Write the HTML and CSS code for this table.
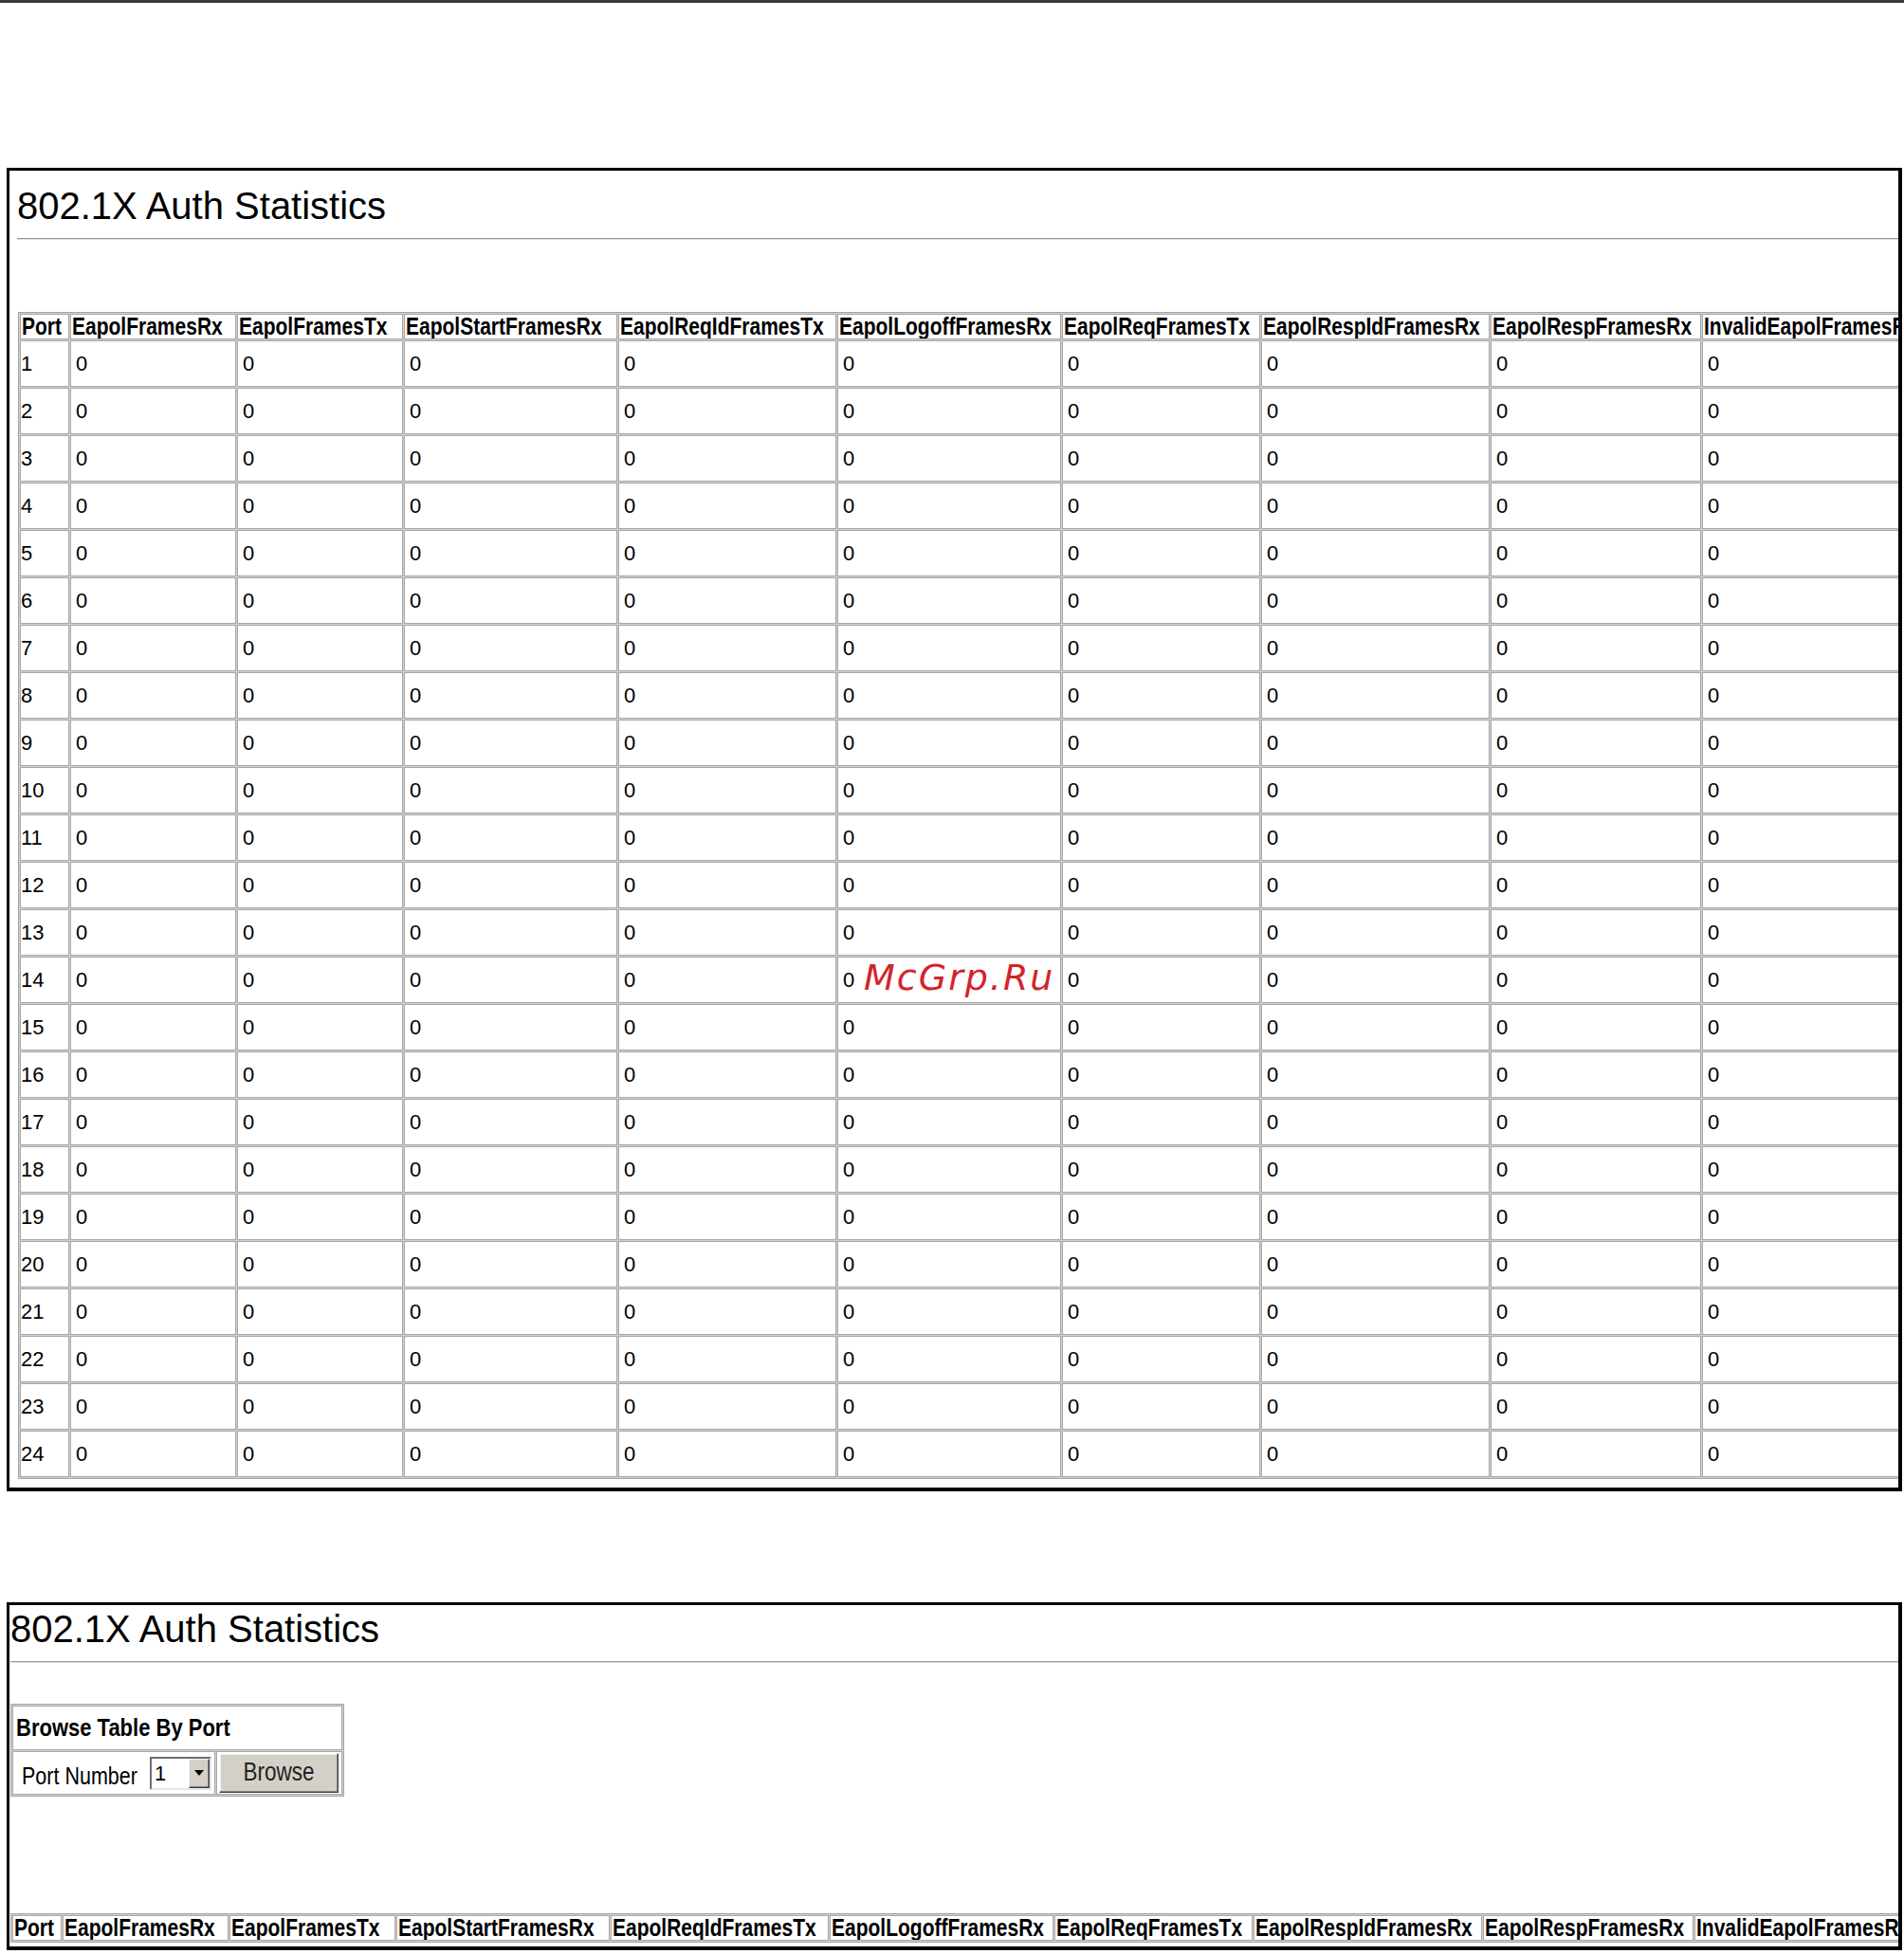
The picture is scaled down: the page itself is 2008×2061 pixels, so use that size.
FILE: index.html
```html
<!DOCTYPE html>
<html lang="en">
<head>
<meta charset="utf-8">
<title>802.1X Auth Statistics</title>
<link rel="stylesheet" href="styles.css">
</head>
<body>
<div class="topbar"></div>

<section class="panel panel-first">
  <h1 class="title">802.1X Auth Statistics</h1>
  <hr class="rule">
  <table class="stats stats-first">
    <thead>
      <tr>
        <th class="c1"><span class="tall">Port</span></th>
        <th class="c2"><span class="tall">EapolFramesRx</span></th>
        <th class="c3"><span class="tall">EapolFramesTx</span></th>
        <th class="c4"><span class="tall">EapolStartFramesRx</span></th>
        <th class="c5"><span class="tall">EapolReqIdFramesTx</span></th>
        <th class="c6"><span class="tall">EapolLogoffFramesRx</span></th>
        <th class="c7"><span class="tall">EapolReqFramesTx</span></th>
        <th class="c8"><span class="tall">EapolRespIdFramesRx</span></th>
        <th class="c9"><span class="tall">EapolRespFramesRx</span></th>
        <th class="c10"><span class="tall">InvalidEapolFramesRx</span></th>
        <th class="c11"><span class="tall">EapLengthErrorFramesRx</span></th>
      </tr>
    </thead>
    <tbody>
      <tr><td class="port">1</td><td>0</td><td>0</td><td>0</td><td>0</td><td>0</td><td>0</td><td>0</td><td>0</td><td>0</td><td>0</td></tr>
      <tr><td class="port">2</td><td>0</td><td>0</td><td>0</td><td>0</td><td>0</td><td>0</td><td>0</td><td>0</td><td>0</td><td>0</td></tr>
      <tr><td class="port">3</td><td>0</td><td>0</td><td>0</td><td>0</td><td>0</td><td>0</td><td>0</td><td>0</td><td>0</td><td>0</td></tr>
      <tr><td class="port">4</td><td>0</td><td>0</td><td>0</td><td>0</td><td>0</td><td>0</td><td>0</td><td>0</td><td>0</td><td>0</td></tr>
      <tr><td class="port">5</td><td>0</td><td>0</td><td>0</td><td>0</td><td>0</td><td>0</td><td>0</td><td>0</td><td>0</td><td>0</td></tr>
      <tr><td class="port">6</td><td>0</td><td>0</td><td>0</td><td>0</td><td>0</td><td>0</td><td>0</td><td>0</td><td>0</td><td>0</td></tr>
      <tr><td class="port">7</td><td>0</td><td>0</td><td>0</td><td>0</td><td>0</td><td>0</td><td>0</td><td>0</td><td>0</td><td>0</td></tr>
      <tr><td class="port">8</td><td>0</td><td>0</td><td>0</td><td>0</td><td>0</td><td>0</td><td>0</td><td>0</td><td>0</td><td>0</td></tr>
      <tr><td class="port">9</td><td>0</td><td>0</td><td>0</td><td>0</td><td>0</td><td>0</td><td>0</td><td>0</td><td>0</td><td>0</td></tr>
      <tr><td class="port">10</td><td>0</td><td>0</td><td>0</td><td>0</td><td>0</td><td>0</td><td>0</td><td>0</td><td>0</td><td>0</td></tr>
      <tr><td class="port">11</td><td>0</td><td>0</td><td>0</td><td>0</td><td>0</td><td>0</td><td>0</td><td>0</td><td>0</td><td>0</td></tr>
      <tr><td class="port">12</td><td>0</td><td>0</td><td>0</td><td>0</td><td>0</td><td>0</td><td>0</td><td>0</td><td>0</td><td>0</td></tr>
      <tr><td class="port">13</td><td>0</td><td>0</td><td>0</td><td>0</td><td>0</td><td>0</td><td>0</td><td>0</td><td>0</td><td>0</td></tr>
      <tr><td class="port">14</td><td>0</td><td>0</td><td>0</td><td>0</td><td>0</td><td>0</td><td>0</td><td>0</td><td>0</td><td>0</td></tr>
      <tr><td class="port">15</td><td>0</td><td>0</td><td>0</td><td>0</td><td>0</td><td>0</td><td>0</td><td>0</td><td>0</td><td>0</td></tr>
      <tr><td class="port">16</td><td>0</td><td>0</td><td>0</td><td>0</td><td>0</td><td>0</td><td>0</td><td>0</td><td>0</td><td>0</td></tr>
      <tr><td class="port">17</td><td>0</td><td>0</td><td>0</td><td>0</td><td>0</td><td>0</td><td>0</td><td>0</td><td>0</td><td>0</td></tr>
      <tr><td class="port">18</td><td>0</td><td>0</td><td>0</td><td>0</td><td>0</td><td>0</td><td>0</td><td>0</td><td>0</td><td>0</td></tr>
      <tr><td class="port">19</td><td>0</td><td>0</td><td>0</td><td>0</td><td>0</td><td>0</td><td>0</td><td>0</td><td>0</td><td>0</td></tr>
      <tr><td class="port">20</td><td>0</td><td>0</td><td>0</td><td>0</td><td>0</td><td>0</td><td>0</td><td>0</td><td>0</td><td>0</td></tr>
      <tr><td class="port">21</td><td>0</td><td>0</td><td>0</td><td>0</td><td>0</td><td>0</td><td>0</td><td>0</td><td>0</td><td>0</td></tr>
      <tr><td class="port">22</td><td>0</td><td>0</td><td>0</td><td>0</td><td>0</td><td>0</td><td>0</td><td>0</td><td>0</td><td>0</td></tr>
      <tr><td class="port">23</td><td>0</td><td>0</td><td>0</td><td>0</td><td>0</td><td>0</td><td>0</td><td>0</td><td>0</td><td>0</td></tr>
      <tr><td class="port">24</td><td>0</td><td>0</td><td>0</td><td>0</td><td>0</td><td>0</td><td>0</td><td>0</td><td>0</td><td>0</td></tr>
    </tbody>
  </table>
</section>

<section class="panel panel-second">
  <h1 class="title">802.1X Auth Statistics</h1>
  <hr class="rule">
  <table class="browse">
    <colgroup>
      <col class="bcol-port">
      <col class="bcol-btn">
    </colgroup>
    <tr><td class="bhead" colspan="2"><span class="tall">Browse Table By Port</span></td></tr>
    <tr>
      <td class="bport">
        <div class="portfield">
          <span class="plabel tall">Port Number</span>
          <div class="select">
            <span class="select-value">1</span>
            <span class="select-arrow"><span class="tri"></span></span>
          </div>
        </div>
      </td>
      <td class="bbtn"><button class="btn" type="button"><span class="tall">Browse</span></button></td>
    </tr>
  </table>
  <table class="stats stats-second">
    <thead>
      <tr>
        <th class="c1"><span class="tall">Port</span></th>
        <th class="c2"><span class="tall">EapolFramesRx</span></th>
        <th class="c3"><span class="tall">EapolFramesTx</span></th>
        <th class="c4"><span class="tall">EapolStartFramesRx</span></th>
        <th class="c5"><span class="tall">EapolReqIdFramesTx</span></th>
        <th class="c6"><span class="tall">EapolLogoffFramesRx</span></th>
        <th class="c7"><span class="tall">EapolReqFramesTx</span></th>
        <th class="c8"><span class="tall">EapolRespIdFramesRx</span></th>
        <th class="c9"><span class="tall">EapolRespFramesRx</span></th>
        <th class="c10"><span class="tall">InvalidEapolFramesRx</span></th>
        <th class="c11"><span class="tall">EapLengthErrorFramesRx</span></th>
      </tr>
    </thead>
  </table>
</section>

<div class="watermark">McGrp.Ru</div>
</body>
</html>
```
FILE: styles.css
```css
* { box-sizing: border-box; }

html, body {
  margin: 0;
  padding: 0;
  background: #fff;
}

body {
  position: relative;
  width: 2008px;
  height: 2061px;
  overflow: hidden;
  font-family: "Liberation Sans", Arial, sans-serif;
  color: #000;
}

.topbar {
  height: 3px;
  background: #3a3a3a;
}

.panel {
  margin-left: 7px;
  margin-right: 2px;
  border-style: solid;
  border-color: #000;
  border-width: 3px 4px 4px 3px;
  overflow: hidden;
}

.panel-first {
  margin-top: 174px;
  padding: 13px 0 9px 8px;
}

.panel-second {
  margin-top: 117px;
  padding: 1px 0 4px 1px;
}

.title {
  margin: 0;
  font-weight: normal;
  font-size: 40px;
  line-height: 48px;
  white-space: nowrap;
}

.rule {
  margin: 10px 0 0 0;
  height: 2px;
  border: 0;
  border-top: 1px solid #9a9a9a;
  border-bottom: 1px solid #dcdcdc;
}

.tall {
  display: inline-block;
  transform: scaleY(1.2);
  transform-origin: 50% 50%;
}

.stats {
  table-layout: fixed;
  border-collapse: separate;
  border-spacing: 1px;
  border: 1px solid #a4a4a4;
  background: #d0d0d0;
  width: 2279px;
  margin-left: 1px;
}

.stats-first { margin-top: 76px; }
.stats-second { margin-top: 123px; margin-left: 0; }

.stats th,
.stats td {
  background: #fff;
  border: 1px solid #a8a8a8;
  padding: 0 0 0 5px;
  white-space: nowrap;
  overflow: hidden;
  text-align: left;
  vertical-align: middle;
}

.stats th {
  height: 27px;
  font-weight: bold;
  font-size: 21px;
  line-height: 24px;
  padding-left: 1px;
}

.stats td {
  height: 49px;
  font-size: 22px;
  line-height: 25px;
}

.stats td.port { padding-left: 0; }

.c1 { width: 52px; }
.c2 { width: 175px; }
.c3 { width: 175px; }
.c4 { width: 225px; }
.c5 { width: 230px; }
.c6 { width: 236px; }
.c7 { width: 209px; }
.c8 { width: 241px; }
.c9 { width: 222px; }
.c10 { width: 240px; }
.c11 { width: 260px; }

.browse {
  margin: 43px 0 0 0;
  table-layout: fixed;
  border-collapse: separate;
  border-spacing: 1px;
  border: 1px solid #a4a4a4;
  background: #d0d0d0;
  width: 352px;
}

.bcol-port { width: 214px; }
.bcol-btn { width: 133px; }

.browse td {
  background: #fff;
  border: 1px solid #a8a8a8;
  padding: 0;
  vertical-align: middle;
}

.browse .bhead {
  height: 47px;
  padding-left: 3px;
  font-weight: bold;
  font-size: 22px;
}

.browse .bport {
  height: 46px;
  padding-left: 9px;
}

.browse .bbtn {
  padding-left: 1px;
}

.portfield {
  display: flex;
  align-items: center;
  gap: 12px;
}

.plabel {
  font-size: 21.5px;
  white-space: nowrap;
  margin-top: 8px;
}

.select {
  display: flex;
  flex: none;
  width: 65px;
  height: 35px;
  margin-left: 1px;
  border-style: solid;
  border-width: 2px;
  border-color: #6e6e6e #e6e6e6 #e6e6e6 #6e6e6e;
  background: #fff;
}

.select-value {
  flex: 1;
  padding-left: 3px;
  font-size: 22px;
  line-height: 31px;
}

.select-arrow {
  width: 22px;
  display: flex;
  align-items: center;
  justify-content: center;
  background: #d4d0c8;
  border-style: solid;
  border-width: 1px;
  border-color: #f4f4f4 #404040 #404040 #f4f4f4;
  box-shadow: inset -1px -1px 0 #808080;
}

.tri {
  width: 0;
  height: 0;
  border-left: 5px solid transparent;
  border-right: 5px solid transparent;
  border-top: 6px solid #000;
}

.btn {
  display: block;
  width: 126px;
  height: 42px;
  margin: 0 0 0 1px;
  padding: 0;
  background: #d4d0c8;
  border-style: solid;
  border-width: 1px;
  border-color: #ffffff #404040 #404040 #ffffff;
  box-shadow: inset -1px -1px 0 #808080, inset 1px 1px 0 #eeeeee;
  font-family: "Liberation Sans", Arial, sans-serif;
  font-size: 22.5px;
  color: #222;
  text-align: center;
}

.watermark {
  position: absolute;
  left: 911px;
  top: 1012px;
  font-family: "DejaVu Sans", sans-serif;
  font-style: italic;
  font-size: 38px;
  line-height: 1;
  letter-spacing: 2px;
  color: #d4232b;
  white-space: nowrap;
}
```
